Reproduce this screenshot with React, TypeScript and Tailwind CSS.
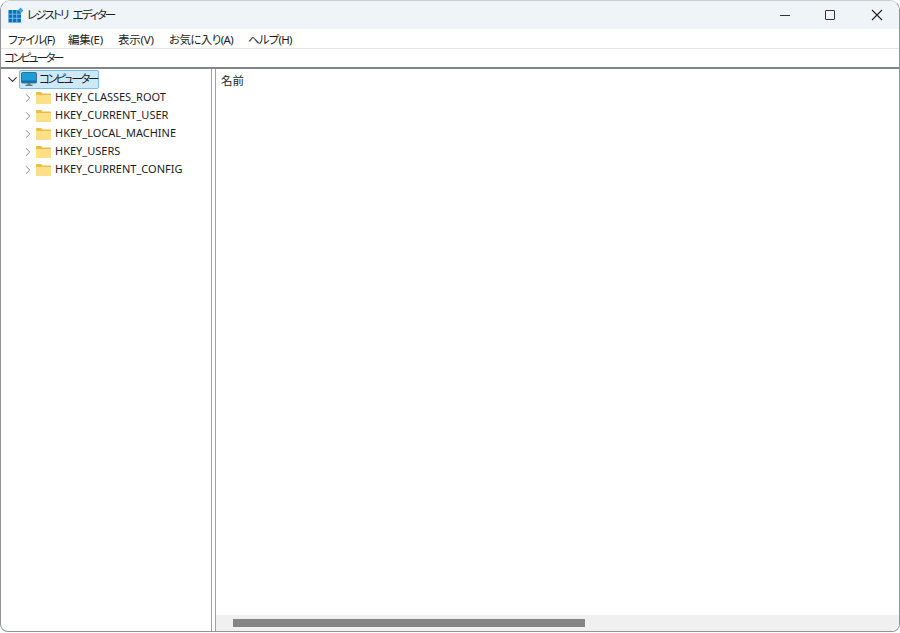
import { ChevronDown, ChevronRight } from 'lucide-react';

const menus = [
  { label: 'ファイル(F)', cls: 'w-[46px] tracking-[-0.9px]' },
  { label: '編集(E)', cls: 'w-[36px] tracking-[-0.3px]' },
  { label: '表示(V)', cls: 'w-[37px] tracking-[-0.2px]' },
  { label: 'お気に入り(A)', cls: 'w-[65px] tracking-[-0.6px]' },
  { label: 'ヘルプ(H)', cls: 'w-[44px] tracking-[-0.8px]' },
];
const hives = ['HKEY_CLASSES_ROOT', 'HKEY_CURRENT_USER', 'HKEY_LOCAL_MACHINE', 'HKEY_USERS', 'HKEY_CURRENT_CONFIG'];

const AppIcon = () => (
  <svg width="16" height="16" viewBox="0 0 16 16" className="shrink-0">
    <rect x="0.5" y="3" width="12.5" height="12.5" fill="#0f6cbd" />
    <path d="M4.6 3v12.5M8.8 3v12.5M0.5 7.2h12.5M0.5 11.3h12.5" stroke="#7cc4ee" strokeWidth="0.9" />
    <path d="M12.6 0.6l2.8 2.8-2.8 2.8-2.8-2.8z" fill="#38a3dc" />
  </svg>
);

const ComputerIcon = () => (
  <svg width="16" height="16" viewBox="0 0 16 16" className="shrink-0">
    <rect x="0.5" y="1.5" width="15" height="10.5" rx="1" fill="#1d9fd6" stroke="#31596e" strokeWidth="0.8" />
    <path d="M1 9.5h14v2H1z" fill="#0f6fa8" />
    <path d="M6.5 12.2h3v1.6h-3z" fill="#5b6f7a" />
    <path d="M4.5 13.8h7v1h-7z" fill="#38505e" />
  </svg>
);

const FolderIcon = () => (
  <svg width="15" height="12" viewBox="0 0 15 12" className="shrink-0">
    <path d="M0 1a1 1 0 0 1 1-1h4l1.5 1.5H14a1 1 0 0 1 1 1V11a1 1 0 0 1-1 1H1a1 1 0 0 1-1-1z" fill="#f0bb45" />
    <path d="M0 3h15v8a1 1 0 0 1-1 1H1a1 1 0 0 1-1-1z" fill="#fddf87" />
  </svg>
);

export default function App() {
  return (
    <div
      className="h-[633px] w-[900px] overflow-hidden bg-white text-[11.5px] text-[#1c1c1c] [font-feature-settings:'palt']"
      style={{ fontFamily: '"Noto Sans", "Noto Sans CJK JP", sans-serif' }}
    >
      <div className="flex h-[632px] flex-col overflow-hidden rounded-t-[10px] rounded-b-lg border border-[#8f9396] border-t-[#c9cdd0]">
        {/* title bar */}
        <div className="flex h-[28px] shrink-0 items-center bg-[#eff4f8] pl-[7px]">
          <AppIcon />
          <span className="ml-[3px] pb-[1px] text-[11.5px] tracking-[-1.9px] [word-spacing:4px]">レジストリ エディター</span>
          <div className="ml-auto flex items-center">
            <div className="mr-[35px] h-px w-[10px] bg-[#333]" />
            <div className="mr-[36px] h-[10px] w-[10px] rounded-[1px] border-[1.5px] border-[#333]" />
            <svg width="12" height="12" viewBox="0 0 12 12" className="mr-[16px]">
              <path d="M1 1l10 10M11 1L1 11" stroke="#222" strokeWidth="1.1" />
            </svg>
          </div>
        </div>
        {/* menu bar */}
        <div className="flex h-[20px] shrink-0 items-center gap-[14px] border-b border-[#e6e6e6] pl-[7px] pt-[2px]">
          {menus.map((m) => (
            <span key={m.label} className={`${m.cls} whitespace-nowrap`}>
              {m.label}
            </span>
          ))}
        </div>
        {/* address bar */}
        <div className="flex h-[20px] shrink-0 items-center border-b-2 border-[#80868a] pl-[3px] tracking-[-2.3px]">コンピューター</div>
        <div className="flex min-h-0 flex-1">
          {/* tree */}
          <div className="w-[211px] shrink-0 border-r border-[#a0a0a0] pt-[1px]">
            <div className="flex h-[18px] items-center pl-[4px]">
              <ChevronDown size={15} strokeWidth={1.8} className="shrink-0 text-[#333]" />
              <div className="ml-[-1px] flex h-[19px] w-[80px] items-center gap-[2px] rounded-[2px] border border-[#7fbbe0] bg-[#cde8f8] pl-px">
                <ComputerIcon />
                <span className="whitespace-nowrap tracking-[-2.3px]">コンピューター</span>
              </div>
            </div>
            {hives.map((h) => (
              <div key={h} className="flex h-[18px] items-center pl-[20px] pt-[1px]">
                <ChevronRight size={14} strokeWidth={1.5} className="shrink-0 text-[#777]" />
                <div className="ml-[1px]">
                  <FolderIcon />
                </div>
                <span className="ml-[4px] text-[11px]">{h}</span>
              </div>
            ))}
          </div>
          {/* list */}
          <div className="ml-[3px] flex min-w-0 flex-1 flex-col border-l border-[#a0a0a0]">
            <div className="flex-1 pl-[5px] pt-[3px]">名前</div>
            <div className="flex h-[16px] shrink-0 items-center bg-[#f0f0f0] pl-[17px]">
              <div className="h-[8px] w-[352px] bg-[#858585]" />
            </div>
          </div>
        </div>
      </div>
    </div>
  );
}
